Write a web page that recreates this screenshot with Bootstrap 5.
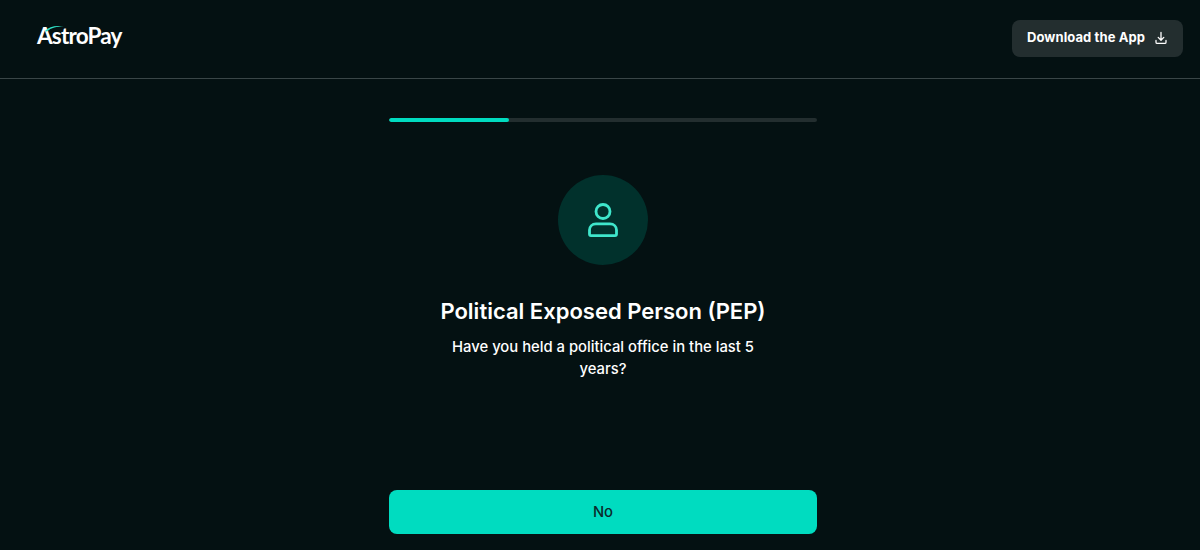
<!DOCTYPE html>
<html lang="en">
<head>
<meta charset="utf-8">
<title>AstroPay</title>
<link href="https://cdn.jsdelivr.net/npm/bootstrap@5.3.0/dist/css/bootstrap.min.css" rel="stylesheet">
<style>
html,body{height:100%;overflow:hidden}
body{background:#041112;color:#fff;font-family:Inter,"Noto Sans",sans-serif}
.top-bar{height:79px;border-bottom:1px solid #3a4647;padding:0 17px 0 37px}
.brand-wrap{position:relative;width:90px;height:34px;margin-top:-6px}
.brand-text{font-family:Lato,sans-serif;font-weight:700;font-size:22.5px;letter-spacing:-.8px;line-height:34px;color:#fff;display:block}
.brand-arc{position:absolute;left:8px;top:6px}
.dl-btn{background:#232e2f;color:#fff;border:0;border-radius:8px;height:37px;width:171px;font-size:13px;font-weight:700;letter-spacing:.1px;margin-top:-2px}
.dl-btn:hover{background:#232e2f;color:#fff}
.dl-btn svg{margin-left:1px}
.flow{width:428px;margin-left:389px}
.track{height:4px;background:#232e2f;border-radius:2px;margin-top:39px}
.track .progress-bar{background:#00dcc0;border-radius:2px}
.avatar{width:90px;height:90px;border-radius:50%;background:#01312c;margin-top:53px}
.pep-title{font-size:22px;font-weight:600;line-height:30px;margin:31px 0 0}
.pep-sub{font-size:14.8px;font-weight:500;line-height:22.500px;width:330px;margin:9.500px 0 0}
.answer{background:#00dcc0;color:#0b2b2c;border:0;border-radius:8px;height:44px;font-size:14.8px;font-weight:500;margin-top:109.500px}
.answer:hover{background:#00dcc0;color:#0b2b2c}
</style>
</head>
<body>
<header class="top-bar d-flex align-items-center justify-content-between">
  <div class="brand-wrap">
    <span class="brand-text">AstroPay</span>
    <svg class="brand-arc" width="20" height="8" viewBox="0 0 20 8" fill="none" aria-hidden="true"><path d="M0 6C4 1.500 11 0 19 1.500C12 1.500 6 2.500 2 6.500Z" fill="#2fe0c6"/></svg>
  </div>
  <button type="button" class="btn dl-btn d-flex align-items-center justify-content-center gap-2">
    <span>Download the App</span>
    <svg width="14" height="14" viewBox="0 0 14 14" fill="none" stroke="#fff" stroke-width="1.300" stroke-linecap="round" stroke-linejoin="round" aria-hidden="true"><path d="M7 1.500V9M4.200 6.400 7 9.200l2.800-2.800M2 9.500v1.700c0 .7.500 1.200 1.200 1.200h7.600c.7 0 1.200-.5 1.200-1.200V9.500"/></svg>
  </button>
</header>
<main class="flow d-flex flex-column">
  <div class="progress track" role="progressbar" aria-valuenow="28" aria-valuemin="0" aria-valuemax="100">
    <div class="progress-bar" style="width:28%"></div>
  </div>
  <div class="avatar align-self-center d-flex align-items-center justify-content-center">
    <svg width="32" height="34" viewBox="0 0 32 34" fill="none" stroke="#3fe6cb" stroke-width="2.800" aria-hidden="true"><circle cx="16" cy="8.500" r="7"/><path d="M9 20.900h14c3.800 0 6.500 2.700 6.500 6.200v3.900c0 .9-.6 1.600-1.500 1.600H4c-.9 0-1.500-.7-1.500-1.600v-3.900c0-3.500 2.700-6.200 6.500-6.200Z"/></svg>
  </div>
  <h1 class="pep-title text-center">Political Exposed Person (PEP)</h1>
  <p class="pep-sub text-center align-self-center">Have you held a political office in the last 5 years?</p>
  <button type="button" class="btn answer w-100">No</button>
</main>
</body>
</html>
